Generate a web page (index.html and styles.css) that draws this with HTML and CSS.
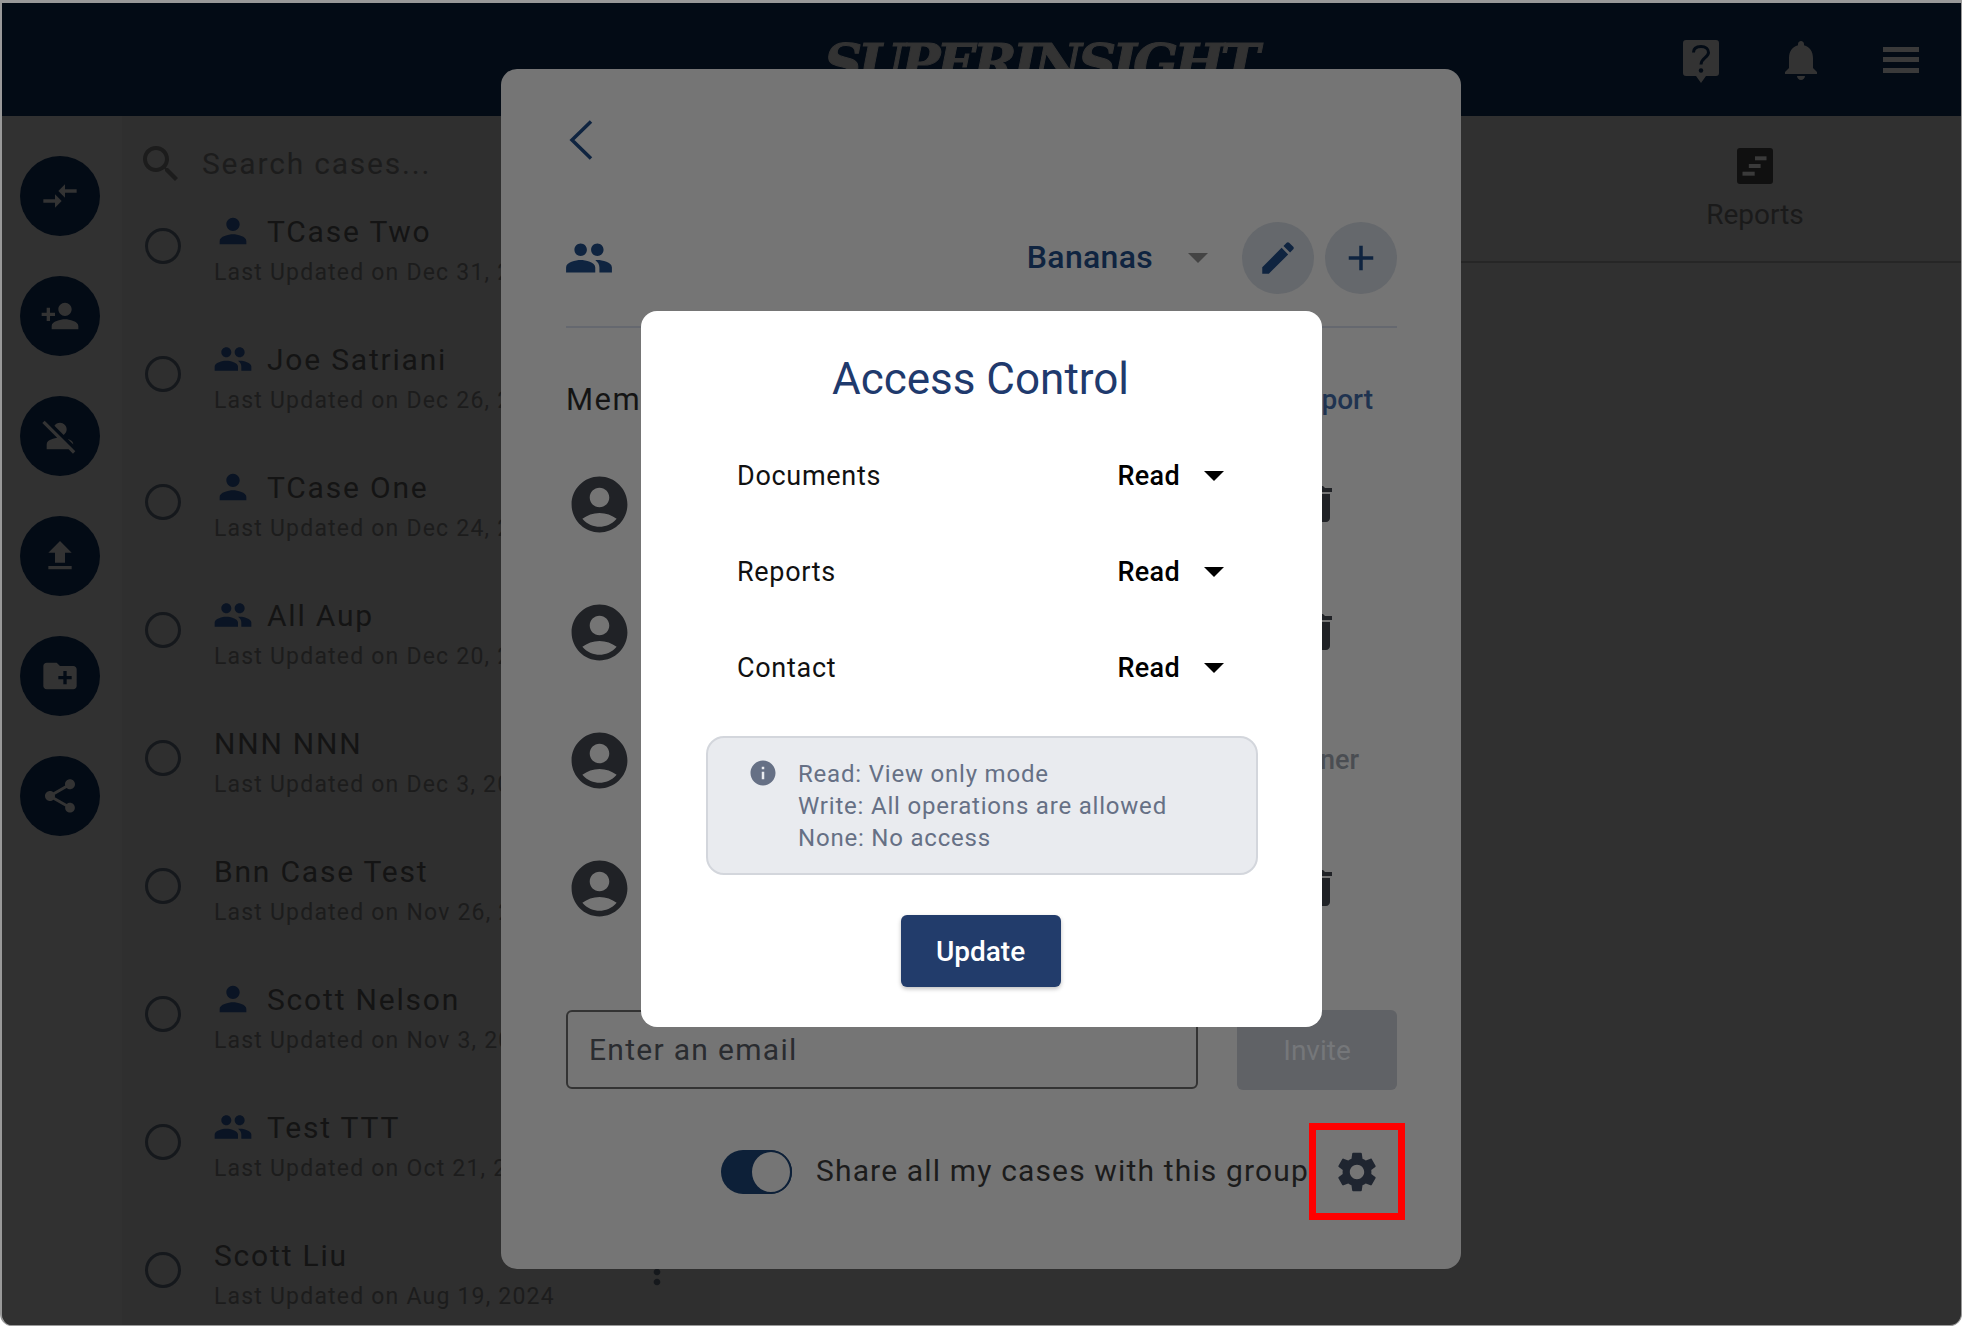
FILE: index.html
```html
<!DOCTYPE html>
<html lang="en">
<head>
<meta charset="utf-8">
<title>Superinsight – Access Control</title>
<link rel="stylesheet" href="styles.css">
</head>
<body>
<svg class="defs" width="0" height="0" aria-hidden="true">
  <symbol id="i-person" viewBox="0 0 24 24"><path d="M12 12c2.21 0 4-1.79 4-4s-1.79-4-4-4-4 1.79-4 4 1.79 4 4 4zm0 2c-2.67 0-8 1.34-8 4v2h16v-2c0-2.66-5.33-4-8-4z"/></symbol>
  <symbol id="i-group" viewBox="0 0 24 24"><path d="M16 11c1.66 0 2.99-1.34 2.99-3S17.66 5 16 5c-1.66 0-3 1.34-3 3s1.34 3 3 3zm-8 0c1.66 0 2.99-1.34 2.99-3S9.66 5 8 5C6.34 5 5 6.34 5 8s1.34 3 3 3zm0 2c-2.33 0-7 1.17-7 3.5V19h14v-2.5c0-2.33-4.67-3.5-7-3.5zm8 0c-.29 0-.62.02-.97.05 1.16.84 1.97 1.97 1.97 3.45V19h6v-2.5c0-2.33-4.67-3.5-7-3.5z"/></symbol>
  <symbol id="i-avatar" viewBox="0 0 24 24"><path d="M12 2C6.48 2 2 6.48 2 12s4.48 10 10 10 10-4.48 10-10S17.52 2 12 2zm0 4c1.93 0 3.5 1.57 3.5 3.5S13.93 13 12 13s-3.5-1.57-3.5-3.5S10.07 6 12 6zm0 14c-2.03 0-4.43-.82-6.14-2.88C7.55 15.8 9.68 15 12 15s4.45.8 6.14 2.12C16.43 19.18 14.03 20 12 20z"/></symbol>
  <symbol id="i-trash" viewBox="0 0 24 24"><path d="M6 19c0 1.1.9 2 2 2h8c1.1 0 2-.9 2-2V7H6v12zM19 4h-3.5l-1-1h-5l-1 1H5v2h14V4z"/></symbol>
  <symbol id="i-more" viewBox="0 0 24 24"><path d="M12 8c1.1 0 2-.9 2-2s-.9-2-2-2-2 .9-2 2 .9 2 2 2zm0 2c-1.1 0-2 .9-2 2s.9 2 2 2 2-.9 2-2-.9-2-2-2zm0 6c-1.1 0-2 .9-2 2s.9 2 2 2 2-.9 2-2-.9-2-2-2z"/></symbol>
</svg>

<div class="app">
  <header class="topbar">
    <div class="logo">SUPERINSIGHT</div>
    <div class="top-actions">
      <svg class="help" viewBox="0 0 36 43"><path d="M3 0h30a3 3 0 0 1 3 3v30a3 3 0 0 1-3 3H23l-5 7-5-7H3a3 3 0 0 1-3-3V3a3 3 0 0 1 3-3z"/><path class="help-q" d="M10.500 12.500C10.500 8.500 13.500 6.500 18 6.500C22.500 6.500 25.500 9 25.500 12.500C25.500 17.500 18 18 18 24.500"/><circle class="help-dot" cx="18" cy="30.500" r="2.200"/></svg>
      <svg class="top-icon" viewBox="0 0 24 24"><path d="M12 22c1.100 0 2-.9 2-2h-4c0 1.100.89 2 2 2zm6-6v-5c0-3.070-1.640-5.640-4.500-6.320V4c0-.83-.67-1.500-1.500-1.500s-1.500.67-1.500 1.500v.68C7.630 5.360 6 7.920 6 11v5l-2 2v1h16v-1l-2-2z"/></svg>
      <div class="hamburger"><span></span><span></span><span></span></div>
    </div>
  </header>

  <div class="main">
    <nav class="sidebar">
      <button class="fab"><svg viewBox="0 0 24 24"><path d="M9.010 14H2v2h7.010v3L13 15l-3.990-4v3zm5.980-1v-3H22V8h-7.010V5L11 9l3.990 4z"/></svg></button>
      <button class="fab"><svg viewBox="0 0 24 24"><path d="M15 12c2.210 0 4-1.790 4-4s-1.790-4-4-4-4 1.790-4 4 1.790 4 4 4zm-9-2V7H4v3H1v2h3v3h2v-3h3v-2H6zm9 4c-2.670 0-8 1.340-8 4v2h16v-2c0-2.660-5.330-4-8-4z"/></svg></button>
      <button class="fab"><svg viewBox="0 0 24 24"><path d="M8.650 5.820C9.360 4.720 10.600 4 12 4c2.210 0 4 1.790 4 4 0 1.400-.72 2.640-1.820 3.350L8.650 5.820zM20 17.170c-.02-1.100-.63-2.110-1.610-2.620-.54-.28-1.130-.54-1.770-.76L20 17.170zm1.190 4.020L2.810 2.810 1.390 4.220l8.890 8.890c-1.810.23-3.390.79-4.670 1.450C4.610 15.070 4 16.100 4 17.220V20h13.170l2.610 2.610 1.410-1.420z"/></svg></button>
      <button class="fab"><svg viewBox="0 0 24 24"><path d="M9 16h6v-6h4l-7-7-7 7h4zm-4 2h14v2H5z"/></svg></button>
      <button class="fab"><svg viewBox="0 0 24 24"><path d="M20 6h-8l-2-2H4c-1.110 0-1.990.89-1.990 2L2 18c0 1.110.89 2 2 2h16c1.110 0 2-.89 2-2V8c0-1.110-.89-2-2-2zm-1 8h-3v3h-2v-3h-3v-2h3V9h2v3h3v2z"/></svg></button>
      <button class="fab"><svg viewBox="0 0 24 24"><path d="M18 16.080c-.76 0-1.440.3-1.960.77L8.910 12.700c.05-.23.09-.46.09-.7s-.04-.47-.09-.7l7.050-4.110c.54.5 1.250.81 2.040.81 1.660 0 3-1.340 3-3s-1.340-3-3-3-3 1.340-3 3c0 .24.04.47.09.7L8.040 9.810C7.500 9.310 6.790 9 6 9c-1.660 0-3 1.340-3 3s1.340 3 3 3c.79 0 1.500-.31 2.040-.81l7.120 4.160c-.05.21-.08.43-.08.65 0 1.610 1.310 2.920 2.920 2.920 1.610 0 2.920-1.310 2.920-2.920s-1.310-2.920-2.920-2.920z"/></svg></button>
    </nav>

    <section class="cases">
      <div class="search">
        <svg class="search-icon" viewBox="0 0 24 24"><path d="M15.500 14h-.79l-.28-.27C15.410 12.590 16 11.110 16 9.500 16 5.910 13.090 3 9.500 3S3 5.910 3 9.500 5.910 16 9.500 16c1.610 0 3.090-.59 4.230-1.570l.27.28v.79l5 4.990L20.490 19l-4.990-5zm-6 0C7.010 14 5 11.990 5 9.500S7.010 5 9.500 5 14 7.010 14 9.500 11.990 14 9.500 14z"/></svg>
        <span>Search cases...</span>
      </div>
      <div class="case"><i class="radio"></i><div class="case-text"><div class="case-title"><svg class="kind"><use href="#i-person"/></svg>TCase Two</div><div class="case-date">Last Updated on Dec 31, 2024</div></div><svg class="more"><use href="#i-more"/></svg></div>
      <div class="case"><i class="radio"></i><div class="case-text"><div class="case-title"><svg class="kind"><use href="#i-group"/></svg>Joe Satriani</div><div class="case-date">Last Updated on Dec 26, 2024</div></div><svg class="more"><use href="#i-more"/></svg></div>
      <div class="case"><i class="radio"></i><div class="case-text"><div class="case-title"><svg class="kind"><use href="#i-person"/></svg>TCase One</div><div class="case-date">Last Updated on Dec 24, 2024</div></div><svg class="more"><use href="#i-more"/></svg></div>
      <div class="case"><i class="radio"></i><div class="case-text"><div class="case-title"><svg class="kind"><use href="#i-group"/></svg>All Aup</div><div class="case-date">Last Updated on Dec 20, 2024</div></div><svg class="more"><use href="#i-more"/></svg></div>
      <div class="case"><i class="radio"></i><div class="case-text"><div class="case-title">NNN NNN</div><div class="case-date">Last Updated on Dec 3, 2024</div></div><svg class="more"><use href="#i-more"/></svg></div>
      <div class="case"><i class="radio"></i><div class="case-text"><div class="case-title">Bnn Case Test</div><div class="case-date">Last Updated on Nov 26, 2024</div></div><svg class="more"><use href="#i-more"/></svg></div>
      <div class="case"><i class="radio"></i><div class="case-text"><div class="case-title"><svg class="kind"><use href="#i-person"/></svg>Scott Nelson</div><div class="case-date">Last Updated on Nov 3, 2024</div></div><svg class="more"><use href="#i-more"/></svg></div>
      <div class="case"><i class="radio"></i><div class="case-text"><div class="case-title"><svg class="kind"><use href="#i-group"/></svg>Test TTT</div><div class="case-date">Last Updated on Oct 21, 2024</div></div><svg class="more"><use href="#i-more"/></svg></div>
      <div class="case"><i class="radio"></i><div class="case-text"><div class="case-title">Scott Liu</div><div class="case-date">Last Updated on Aug 19, 2024</div></div><svg class="more"><use href="#i-more"/></svg></div>
    </section>

    <section class="detail">
      <div class="tabs">
        <div class="tab">
          <svg class="tab-icon" viewBox="0 0 36 36"><rect class="tab-sheet" width="36" height="36" rx="3"/><rect class="tab-bar" x="18" y="8.300" width="11.500" height="4"/><rect class="tab-bar" x="11.800" y="16" width="11.800" height="4"/><rect class="tab-bar" x="5.500" y="23.700" width="12.200" height="4"/></svg>
          <span>Reports</span>
        </div>
      </div>
    </section>
  </div>

  <div class="panel">
    <svg class="back" viewBox="0 0 24 40"><path d="M22 1.500L3 20L22 38.500"/></svg>
    <div class="group-row">
      <svg class="group-icon"><use href="#i-group"/></svg>
      <span class="group-name">Bananas</span>
      <i class="group-caret"></i>
      <button class="round first"><svg viewBox="0 0 24 24"><path d="M3 17.250V21h3.750L17.810 9.940l-3.750-3.750L3 17.250zM20.710 7.040c.39-.39.39-1.020 0-1.410l-2.340-2.340a.9959.9959 0 0 0-1.410 0l-1.830 1.830 3.750 3.750 1.830-1.830z"/></svg></button>
      <button class="round"><svg viewBox="0 0 24 24"><path d="M19 13h-6v6h-2v-6H5v-2h6V5h2v6h6v2z"/></svg></button>
    </div>
    <div class="rule"></div>
    <div class="members-head"><span>Members</span><span class="export">Export</span></div>
    <div class="member"><svg class="avatar"><use href="#i-avatar"/></svg><svg class="trash"><use href="#i-trash"/></svg></div>
    <div class="member"><svg class="avatar"><use href="#i-avatar"/></svg><svg class="trash"><use href="#i-trash"/></svg></div>
    <div class="member"><svg class="avatar"><use href="#i-avatar"/></svg><span class="owner">Owner</span></div>
    <div class="member"><svg class="avatar"><use href="#i-avatar"/></svg><svg class="trash"><use href="#i-trash"/></svg></div>
    <div class="invite-row">
      <div class="email">Enter an email</div>
      <button class="invite">Invite</button>
    </div>
    <div class="share-row">
      <div class="toggle"><i></i></div>
      <span class="share-label">Share all my cases with this group</span>
      <div class="gear-mark"><svg viewBox="0 0 24 24"><path d="M19.140 12.940c.04-.3.06-.61.06-.94 0-.32-.02-.64-.07-.94l2.030-1.580c.18-.14.23-.41.12-.61l-1.920-3.320c-.12-.22-.37-.29-.59-.22l-2.390.96c-.5-.38-1.030-.7-1.620-.94l-.36-2.540c-.04-.24-.24-.41-.48-.41h-3.840c-.24 0-.43.17-.47.41l-.36 2.540c-.59.24-1.130.57-1.620.94l-2.390-.96c-.22-.08-.47 0-.59.22L2.740 8.870c-.12.21-.08.47.12.61l2.030 1.580c-.05.3-.09.63-.09.94s.02.64.07.94l-2.030 1.580c-.18.14-.23.41-.12.61l1.920 3.320c.12.22.37.29.59.22l2.390-.96c.5.38 1.030.7 1.620.94l.36 2.540c.05.24.24.41.48.41h3.840c.24 0 .44-.17.47-.41l.36-2.540c.59-.24 1.130-.56 1.620-.94l2.390.96c.22.08.47 0 .59-.22l1.920-3.320c.12-.22.07-.47-.12-.61l-2.010-1.580zM12 15.600c-1.980 0-3.600-1.620-3.600-3.600s1.620-3.600 3.600-3.600 3.600 1.620 3.600 3.600-1.620 3.600-3.600 3.600z"/></svg></div>
    </div>
  </div>

  <div class="modal">
    <h2 class="modal-title">Access Control</h2>
    <div class="perm"><span>Documents</span><span class="perm-value">Read</span><i class="perm-caret"></i></div>
    <div class="perm"><span>Reports</span><span class="perm-value">Read</span><i class="perm-caret"></i></div>
    <div class="perm"><span>Contact</span><span class="perm-value">Read</span><i class="perm-caret"></i></div>
    <div class="note">
      <svg class="note-icon" viewBox="0 0 24 24"><path d="M12 2C6.480 2 2 6.480 2 12s4.480 10 10 10 10-4.480 10-10S17.520 2 12 2zm1 15h-2v-6h2v6zm0-8h-2V7h2v2z"/></svg>
      <div class="note-text">Read: View only mode<br>Write: All operations are allowed<br>None: No access</div>
    </div>
    <button class="update">Update</button>
  </div>
</div>
</body>
</html>
```
FILE: styles.css
```css
* { box-sizing: border-box; }
html, body { margin: 0; height: 100%; background: #fff; }
body { font-family: "Roboto", "Liberation Sans", sans-serif; overflow: hidden; }
.defs { position: absolute; }
button { font-family: inherit; border: 0; padding: 0; }

.app {
  position: relative;
  width: 1962px;
  height: 1326px;
  display: flex;
  flex-direction: column;
  overflow: hidden;
  background: #303030;
  border-style: solid;
  border-color: #999;
  border-width: 3px 1px 1px 2px;
  border-radius: 0 0 12px 12px;
}

/* top bar */
.topbar {
  flex: none;
  height: 113px;
  background: #030b15;
  display: flex;
  align-items: center;
  padding-right: 36px;
}
.logo {
  margin-left: 822px;
  margin-top: 5px;
  font-family: "DejaVu Serif", serif;
  font-weight: 700;
  font-style: italic;
  font-size: 53px;
  line-height: 60px;
  letter-spacing: -4px;
  color: #333;
  -webkit-text-stroke: 1px #333;
  white-space: nowrap;
}
.top-actions { margin-left: auto; display: flex; align-items: center; gap: 52px; }
.help { width: 36px; height: 43px; margin: 3px 6px 0; fill: #333; }
.help-q { fill: none; stroke: #030b15; stroke-width: 3; }
.help-dot { fill: #030b15; }
.top-icon { width: 48px; height: 48px; fill: #333; }
.hamburger { width: 48px; height: 48px; padding: 11px 6px; display: flex; flex-direction: column; justify-content: space-between; }
.hamburger span { display: block; height: 5px; background: #3a3a3a; }

/* main */
.main { flex: 1; display: flex; min-height: 0; }
.sidebar {
  flex: none;
  width: 120px;
  padding: 40px 0 0 18px;
  display: flex;
  flex-direction: column;
  gap: 40px;
  background: #313131;
}
.fab {
  width: 80px;
  height: 80px;
  border-radius: 50%;
  background: #030b15;
  display: flex;
  align-items: center;
  justify-content: center;
}
.fab svg { width: 40px; height: 40px; fill: #333; }

.cases { flex: none; width: 598px; padding: 0 43px 0 23px; background: #2f2f2f; }
.search {
  height: 66px;
  padding-top: 24px;
  display: flex;
  align-items: flex-start;
  margin-left: -8px;
  font-size: 30px;
  line-height: 48px;
  letter-spacing: 1.8px;
  color: #1c1c1c;
  white-space: nowrap;
}
.search-icon { width: 48px; height: 48px; fill: #1c1c1c; margin-right: 17px; flex: none; }
.case { height: 128px; display: flex; align-items: flex-start; }
.radio {
  flex: none;
  width: 36px;
  height: 36px;
  margin-top: 46px;
  border: 3px solid #15181c;
  border-radius: 50%;
}
.case-text { flex: 1; min-width: 0; margin-left: 33px; padding-top: 29px; }
.case-title {
  display: flex;
  align-items: center;
  height: 40px;
  font-size: 30px;
  letter-spacing: 1.8px;
  color: #141414;
  white-space: nowrap;
}
.kind { flex: none; width: 40px; height: 40px; margin-left: -1px; fill: #0a1424; margin-right: 14px; }
.case-date {
  margin-top: 7px;
  font-size: 23px;
  line-height: 30px;
  letter-spacing: 1.2px;
  color: #1c1c1c;
  white-space: nowrap;
}
.more { flex: none; width: 40px; height: 40px; margin-top: 46px; fill: #15181c; }

.detail { flex: 1; min-width: 0; }
.tabs { height: 147px; border-bottom: 2px solid #262626; display: flex; justify-content: flex-end; }
.tab {
  width: 412px;
  display: flex;
  flex-direction: column;
  align-items: center;
  padding-top: 32px;
  font-size: 28px;
  color: #1a1a1a;
}
.tab-icon { width: 36px; height: 36px; margin-bottom: 14px; }
.tab-sheet { fill: #101010; }
.tab-bar { fill: #3a3a3a; }

/* group panel */
.panel {
  position: absolute;
  left: 499px;
  top: 66px;
  width: 960px;
  height: 1200px;
  padding: 51px 64px 0 65px;
  background: #757575;
  border-radius: 16px;
  display: flex;
  flex-direction: column;
}
.back { width: 24px; height: 40px; margin-left: 3px; flex: none; fill: none; stroke: #0f2440; stroke-width: 3.500; }
.group-row { display: flex; align-items: center; height: 72px; margin-top: 62px; flex: none; }
.group-icon { width: 50px; height: 50px; margin-left: -2px; fill: #0f2440; }
.group-name { margin-left: auto; margin-top: -2px; font-size: 32px; font-weight: 500; letter-spacing: .3px; color: #0f2440; }
.group-caret { width: 0; height: 0; margin-left: 35px; border-style: solid; border-width: 10px 10px 0; border-color: #444 transparent transparent; }
.round {
  width: 72px;
  height: 72px;
  margin-left: 11px;
  border-radius: 50%;
  background: #65686c;
  display: flex;
  align-items: center;
  justify-content: center;
  flex: none;
}
.round.first { margin-left: 34px; }
.round svg { width: 42px; height: 42px; fill: #0f2440; }
.rule { height: 2px; background: #65686f; margin-top: 32px; flex: none; }
.members-head {
  display: flex;
  justify-content: space-between;
  height: 40px;
  line-height: 40px;
  margin-top: 52px;
  font-size: 31px;
  letter-spacing: 1.5px;
  color: #141414;
  flex: none;
}
.export { font-size: 28px; font-weight: 500; letter-spacing: 0; color: #1f3350; margin-right: 24px; }
.member { height: 128px; display: flex; align-items: center; justify-content: space-between; flex: none; }
.members-head + .member { margin-top: 20px; }
.avatar { width: 67px; height: 67px; fill: #202226; }
.trash { width: 48px; height: 48px; margin-right: 55px; fill: #202226; }
.owner { font-size: 27px; font-weight: 500; color: #4a4d52; margin-right: 38px; }
.invite-row { display: flex; justify-content: space-between; margin-top: 58px; flex: none; }
.email {
  width: 632px;
  height: 79px;
  padding-left: 21px;
  border: 2px solid #333;
  border-radius: 6px;
  font-size: 30px;
  line-height: 75px;
  letter-spacing: 1.3px;
  color: #2a2c30;
}
.invite { width: 160px; height: 80px; border-radius: 6px; background: #606266; color: #75777a; font-size: 28px; }
.share-row { display: flex; align-items: center; margin: 33px 0 0 155px; flex: none; }
.toggle { width: 71px; height: 44px; border-radius: 22px; background: #0d2038; display: flex; justify-content: flex-end; flex: none; }
.toggle i { width: 42px; height: 44px; border: 2px solid #0d2038; border-radius: 50%; background: #757575; }
.share-label { margin: -2px 0 0 24px; font-size: 30px; letter-spacing: 1.15px; color: #1c1c1c; white-space: nowrap; }
.gear-mark {
  width: 96px;
  height: 97px;
  border: 7px solid #f00;
  display: flex;
  align-items: center;
  justify-content: center;
  flex: none;
}
.gear-mark svg { width: 48px; height: 48px; fill: #1f2530; }

/* access control dialog */
.modal {
  position: absolute;
  left: 639px;
  top: 308px;
  width: 681px;
  height: 716px;
  padding: 43px 98px 0 96px;
  background: #fff;
  border-radius: 16px;
  display: flex;
  flex-direction: column;
}
.modal-title { margin: 0 0 24px; text-align: center; font-size: 44px; line-height: 50px; font-weight: 400; color: #1f3a6d; }
.perm { height: 96px; display: flex; align-items: center; font-size: 27px; letter-spacing: .7px; color: #111; flex: none; }
.perm-value { margin-left: auto; font-weight: 500; color: #000; letter-spacing: .3px; }
.perm-caret { width: 0; height: 0; margin-left: 24px; border-style: solid; border-width: 10px 10px 0; border-color: #000 transparent transparent; }
.note {
  margin: 20px -34px 0 -31px;
  height: 139px;
  padding: 20px 0 0 40px;
  display: flex;
  background: #e9ebef;
  border: 2px solid #d3d6dc;
  border-radius: 18px;
  flex: none;
}
.note-icon { width: 30px; height: 30px; fill: #667085; flex: none; }
.note-text { margin-left: 20px; font-size: 24px; line-height: 32px; letter-spacing: .8px; color: #667085; white-space: nowrap; }
.update {
  align-self: center;
  margin-top: 40px;
  width: 160px;
  height: 72px;
  border-radius: 6px;
  background: #223c6b;
  color: #fff;
  font-size: 28px;
  font-weight: 500;
  box-shadow: 0 2px 4px rgba(0, 0, 0, .25);
  flex: none;
}
```
